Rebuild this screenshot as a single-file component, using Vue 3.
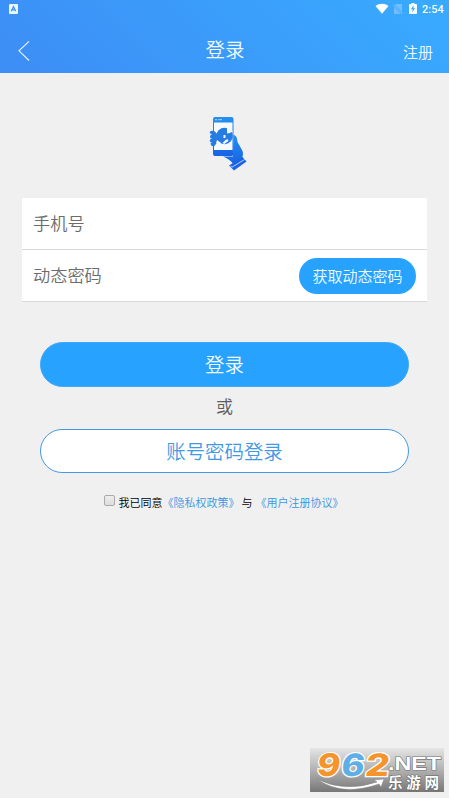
<script setup>
import { ref } from 'vue'

const phone = ref('')
const code = ref('')
const agreed = ref(false)
</script>

<template>
  <div class="page">
    <header class="header">
      <div class="status">
        <svg class="ime" width="9" height="10" viewBox="0 0 9 10">
          <rect width="9" height="10" rx="1" fill="#e9f8ff" />
          <path d="M2.300 7.200 4.500 2.700 6.700 7.200M3.100 5.900h2.800" fill="none" stroke="#4294f0" stroke-width="1.300" />
        </svg>
        <svg class="wifi" width="14" height="11" viewBox="0 0 14 11">
          <path d="M.5 3C4.200 0 9.800 0 13.500 3L7 10.700Z" fill="#fff" />
        </svg>
        <svg class="sim" width="10" height="11" viewBox="0 0 10 11">
          <path d="M3 0h6v8L2 1ZM1 3 8 10H1Z" fill="#73bdff" />
          <path d="M0 .500 9.500 10" stroke="#8fcbff" stroke-width=".8" />
        </svg>
        <svg class="battery" width="8" height="11" viewBox="0 0 8 11">
          <path d="M2.500 0h3v1H7q1 0 1 1v8q0 1-1 1H1q-1 0-1-1V2q0-1 1-1h1.500Z" fill="#f4fcff" />
          <path d="M4.700 2.300 2 6.200h1.700L3.300 9.300 6 5.200H4.300Z" fill="#37a0f8" />
        </svg>
        <span class="time">2:54</span>
      </div>
      <nav class="nav">
        <svg class="back" width="12" height="22" viewBox="0 0 12 22">
          <path d="M11 1.300 1 10.800 11 20.500" fill="none" stroke="#e6f8ff" stroke-width="1.100" />
        </svg>
        <h1 class="title">登录</h1>
        <span class="register">注册</span>
      </nav>
    </header>

    <main>
      <svg class="logo" width="40" height="56" viewBox="0 0 40 56">
        <defs>
          <linearGradient id="blue" x1="0" y1="0" x2="0" y2="1">
            <stop offset="0" stop-color="#2590ed" />
            <stop offset="1" stop-color="#1763e5" />
          </linearGradient>
        </defs>
        <path d="M24.500 19Q28 19 28.500 26L33 34Q35 37 33 42L24 48Q21 43 14 40.500H24Z" fill="url(#blue)" />
        <path d="M20 49.500 33.500 41 37.500 45.500 25 54.500Z" fill="#1c62e4" />
        <path d="m21.500 50 1.500 1.200L35.500 43.500" fill="none" stroke="#dce9fb" stroke-width=".8" />
        <rect x="4" y="1" width="20.500" height="39" rx="2" fill="url(#blue)" />
        <path d="M5 6.500h18.500v27.500H5z" fill="#f5faff" />
        <circle cx="7" cy="3.700" r=".7" fill="#fff" />
        <path d="M9 3.700h4" stroke="#9bd3ff" stroke-width="1" />
        <circle cx="15.500" cy="20" r="8.300" fill="#257ce2" />
        <path d="M1 15.500q2-1.500 5 0l4 5-1 5-4 5q-3 0-3.500-3l1.500-1q-3-.5-2-3l2-.7q-3-1-1.500-3.500L3 18q-3-.5-2-2.500Z" fill="#257ce2" />
        <path d="m18 12 2-2 1 4 3 1-3 2-3 .5ZM14.500 19h2v3h-2zM16.500 24l2-1 1 2-3 2-1 1-2-1ZM8 24l4 3-2 1-3-1Z" fill="#f5faff" />
      </svg>

      <form class="fields" @submit.prevent>
        <label class="field">
          <input v-model="phone" placeholder="手机号" />
        </label>
        <label class="field">
          <input v-model="code" placeholder="动态密码" />
          <button type="button" class="send">获取动态密码</button>
        </label>
      </form>

      <section class="actions">
        <button class="primary">登录</button>
        <span class="or">或</span>
        <button class="secondary">账号密码登录</button>
      </section>

      <div class="agreement">
        <input v-model="agreed" class="check" type="checkbox" />
        <span>我已同意</span><a class="link">《隐私权政策》</a><span class="and">与</span><a class="link">《用户注册协议》</a>
      </div>
    </main>

    <svg class="mark" width="134" height="44" viewBox="0 0 134 44">
      <defs>
        <linearGradient id="gray" x1="0" y1="0" x2="0" y2="1">
          <stop offset="0" stop-color="#e5e5e5" />
          <stop offset=".5" stop-color="#b1b1b1" />
          <stop offset="1" stop-color="#777" />
        </linearGradient>
      </defs>
      <rect width="134" height="44" fill="url(#gray)" />
      <g class="digits" transform="translate(4 0) skewX(-8)">
        <text x="6" y="27.500" textLength="23" lengthAdjust="spacingAndGlyphs" fill="#f5942b">9</text>
        <text x="30" y="27.500" textLength="23" lengthAdjust="spacingAndGlyphs" fill="#5eafe5">6</text>
        <text x="54" y="27.500" textLength="24" lengthAdjust="spacingAndGlyphs" fill="#f5942b">2</text>
      </g>
      <text class="net" x="78" y="22" textLength="53" lengthAdjust="spacingAndGlyphs">.NET</text>
      <path d="M7 31Q34 45 67 34l-3-2 10-1-3 8-2-3Q32 49 7 31Z" fill="#fff" stroke="#858585" stroke-width=".5" />
      <text class="cn" x="78" y="39.500" textLength="51">乐游网</text>
    </svg>
  </div>
</template>

<style>
body { background: #f0f0f0; }
</style>

<style scoped>
* { box-sizing: border-box; }
.page {
  position: relative;
  width: 449px;
  height: 798px;
  overflow: hidden;
  background: #f0f0f0;
  font-family: "Noto Sans CJK SC", sans-serif;
  font-weight: 350;
}
button, input { font-family: inherit; font-weight: inherit; margin: 0; padding: 0; }
.header { height: 73px; background: linear-gradient(45deg, #3d8df5, #38abff); }
.status { display: flex; height: 20px; padding: 4px 6px 0 9px; align-items: flex-start; }
.wifi { margin-left: auto; margin-top: -1px; }
.sim { margin-left: 4px; }
.battery { margin-left: 6px; margin-top: -1px; }
.time { margin-left: 5px; font: 500 11px/11px Roboto, sans-serif; color: #f4fcff; width: 21px; white-space: nowrap; }
.nav { display: grid; grid-template-columns: 80px 1fr 80px; height: 53px; padding: 0 17px 0 18px; }
.back { margin-top: 20px; }
.title { margin: 14px 0 0; text-align: center; color: #effaff; font-size: 19.5px; line-height: 29px; font-weight: inherit; }
.register { margin-top: 21px; margin-right: -1px; text-align: right; color: #effaff; font-size: 15px; line-height: 22px; }
.logo { display: block; margin: 43px 0 0 209px; }
.fields { width: 405px; margin: 26px 0 0 22px; background: #fff; }
.field { display: flex; align-items: center; height: 52px; padding: 0 11px; border-bottom: 1px solid #d9d9d9; }
.field input { flex: 1; min-width: 0; height: 50px; padding-bottom: 2px; border: 0; outline: 0; background: transparent; font-size: 17.2px; color: #333; }
.field input::placeholder { color: #6c6c6c; opacity: 1; }
.send { width: 117px; height: 36px; border: 0; border-radius: 18px; background: #27a2ff; color: #f2fcff; font-size: 15px; line-height: 36px; }
.actions { display: flex; flex-direction: column; width: 369px; margin: 40px 0 0 40px; }
.primary, .secondary { padding-bottom: 2px; border-radius: 23px; font-size: 19.4px; }
.primary { height: 45px; border: 1px solid #3ea8fb; background: #27a2ff; color: #f2fcff; }
.or { height: 42px; line-height: 38px; font-size: 17px; color: #5d5d5d; text-align: center; }
.secondary { height: 44px; border: 1px solid #4398e4; background: #fff; color: #4398e4; }
.agreement { display: flex; align-items: center; height: 20px; margin: 19px 0 0 104px; font-size: 11px; line-height: 20px; color: #000; white-space: nowrap; }
.check { appearance: none; flex: none; width: 11px; height: 11px; margin: -3px 3.500px 0 0; border: 1px solid #aaa; border-radius: 2px; background: linear-gradient(#eee, #dcdcdc); }
.link { color: #3995e2; }
.and { margin: 0 3px 0 2px; }
.mark { position: absolute; left: 310px; top: 748px; }
.digits { font: 800 31px Inter, sans-serif; stroke: #fff; stroke-width: 2.400px; paint-order: stroke; }
.net { font: 700 19px "Liberation Sans", sans-serif; fill: #fff; stroke: #777; stroke-width: 1.200px; paint-order: stroke; }
.cn { font: 700 14.500px "Noto Sans CJK SC", sans-serif; fill: #fff; stroke: #666; stroke-width: 1px; paint-order: stroke; }
</style>
